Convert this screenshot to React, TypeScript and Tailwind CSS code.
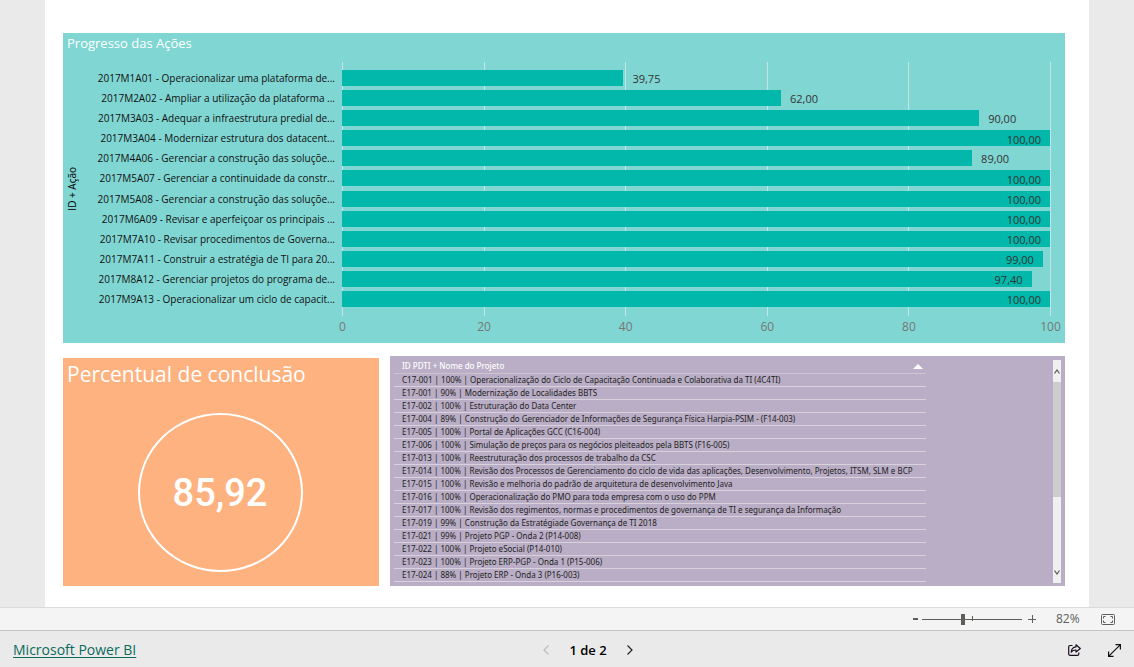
import { useState } from "react";

const actions = [
  { name: "2017M1A01 - Operacionalizar uma plataforma de...", value: 39.75 },
  { name: "2017M2A02 - Ampliar a utilização da plataforma ...", value: 62 },
  { name: "2017M3A03 - Adequar a infraestrutura predial de...", value: 90 },
  { name: "2017M3A04 - Modernizar estrutura dos datacent...", value: 100 },
  { name: "2017M4A06 - Gerenciar a construção das soluçõe...", value: 89 },
  { name: "2017M5A07 - Gerenciar a continuidade da constr...", value: 100 },
  { name: "2017M5A08 - Gerenciar a construção das soluçõe...", value: 100 },
  { name: "2017M6A09 - Revisar e aperfeiçoar os principais ...", value: 100 },
  { name: "2017M7A10 - Revisar procedimentos de Governa...", value: 100 },
  { name: "2017M7A11 - Construir a estratégia de TI para 20...", value: 99 },
  { name: "2017M8A12 - Gerenciar projetos do programa de...", value: 97.4 },
  { name: "2017M9A13 - Operacionalizar um ciclo de capacit...", value: 100 },
];

const projects = [
  "C17-001 | 100% | Operacionalização do Ciclo de Capacitação Continuada e Colaborativa da TI (4C4TI)",
  "E17-001 | 90% | Modernização de Localidades BBTS",
  "E17-002 | 100% | Estruturação do Data Center",
  "E17-004 | 89% | Construção do Gerenciador de Informações de Segurança Física Harpia-PSIM - (F14-003)",
  "E17-005 | 100% | Portal de Aplicações GCC (C16-004)",
  "E17-006 | 100% | Simulação de preços para os negócios pleiteados pela BBTS (F16-005)",
  "E17-013 | 100% | Reestruturação dos processos de trabalho da CSC",
  "E17-014 | 100% | Revisão dos Processos de Gerenciamento do ciclo de vida das aplicações, Desenvolvimento, Projetos, ITSM, SLM e BCP",
  "E17-015 | 100% | Revisão e melhoria do padrão de arquitetura de desenvolvimento Java",
  "E17-016 | 100% | Operacionalização do PMO para toda empresa com o uso do PPM",
  "E17-017 | 100% | Revisão dos regimentos, normas e procedimentos de governança de TI e segurança da Informação",
  "E17-019 | 99% | Construção da Estratégiade Governança de TI 2018",
  "E17-021 | 99% | Projeto PGP - Onda 2 (P14-008)",
  "E17-022 | 100% | Projeto eSocial (P14-010)",
  "E17-023 | 100% | Projeto ERP-PGP - Onda 1 (P15-006)",
  "E17-024 | 88% | Projeto ERP - Onda 3 (P16-003)",
];

const ticks = [0, 20, 40, 60, 80, 100];

function format(value: number) {
  return value.toFixed(2).replace(".", ",");
}

function ProgressChart() {
  return (
    <section className="bg-[#80d6d3] pt-px pb-[8px]">
      <h2 className="px-1 text-[13px] leading-[18px] text-white">Progresso das Ações</h2>
      <div className="mt-[10px] grid grid-cols-[18px_261px_1fr] pr-[14px]">
        <div className="flex items-center justify-center">
          <span className="rotate-180 text-[10px] leading-4 whitespace-nowrap text-black [writing-mode:vertical-rl]">
            ID + Ação
          </span>
        </div>
        <ul className="flex h-[254px] flex-col pt-[6px] pr-[7px] pb-[7px]">
          {actions.map((a) => (
            <li
              key={a.name}
              className="flex flex-1 items-center justify-end text-[10px] leading-4 whitespace-nowrap text-[#111]"
            >
              {a.name}
            </li>
          ))}
        </ul>
        <div className="grid h-[254px]">
          <div className="col-start-1 row-start-1 flex justify-between">
            {ticks.map((t) => (
              <span key={t} className="w-px bg-[#c2e6e5]" />
            ))}
          </div>
          <ul className="col-start-1 row-start-1 flex flex-col pt-[6px] pr-px pb-[7px]">
            {actions.map((a) => (
              <li key={a.name} className="flex flex-1 items-center text-[11px] leading-4 text-[#333]">
                <div
                  className="flex h-4 items-center justify-end bg-[#01b8aa] pr-[9px]"
                  style={{ width: `${a.value}%` }}
                >
                  {a.value > 95 && <span className="pt-[3px]">{format(a.value)}</span>}
                </div>
                {a.value <= 95 && <span className="pt-[2px] pl-[9px]">{format(a.value)}</span>}
              </li>
            ))}
          </ul>
        </div>
        <div className="col-start-3 flex justify-between pt-[3px] text-[12px] leading-4 text-[#777]">
          {ticks.map((t) => (
            <span key={t} className="flex w-px justify-center">
              {t}
            </span>
          ))}
        </div>
      </div>
    </section>
  );
}

function CompletionCard() {
  return (
    <section className="mt-[2px] flex flex-col bg-[#fdb280]">
      <h2 className="px-1 text-[21px] leading-8 whitespace-nowrap text-white">Percentual de conclusão</h2>
      <div className="flex flex-1 items-start justify-center pt-[23px] pr-[2px]">
        <div className="flex h-[159px] w-[165px] items-center justify-center rounded-[50%] border-2 border-white">
          <span className="font-[Roboto] text-[38px] leading-none font-medium text-white">85,92</span>
        </div>
      </div>
    </section>
  );
}

function ProjectTable() {
  return (
    <section className="flex bg-[#b9aec5] pt-1 pr-1 pb-[3px] pl-1">
      <div className="min-w-0 flex-1">
        <table className="w-[532px] border-collapse text-left font-['Noto_Sans'] text-[8px] whitespace-nowrap text-[#222]">
          <thead>
            <tr className="h-[13px] border-b border-[#cbc5d1]">
              <th className="p-0 pl-2 leading-3 font-medium text-white" aria-sort="ascending">
                <button type="button" className="flex w-full items-center justify-between pr-[3px]">
                  ID PDTI + Nome do Projeto
                  <svg width="10" height="5" viewBox="0 0 10 5" fill="white">
                    <path d="M0 5 5 0l5 5z" />
                  </svg>
                </button>
              </th>
            </tr>
          </thead>
          <tbody>
            {projects.map((p) => (
              <tr key={p} className="h-[13px] border-b border-[#d8d2dc]">
                <td className="p-0 pl-2 leading-3">{p}</td>
              </tr>
            ))}
          </tbody>
        </table>
      </div>
      <div className="flex w-2 flex-col bg-[#f0f0f0]">
        <button type="button" aria-label="Rolar para cima" className="flex h-[22px] items-center justify-center">
          <svg width="6" height="5" viewBox="0 0 6 5" fill="none" stroke="#505050" strokeWidth="1.1">
            <path d="M.5 4.5 3 1l2.500 3.500" />
          </svg>
        </button>
        <div className="h-[115px] bg-[#cdcdcd]" />
        <button
          type="button"
          aria-label="Rolar para baixo"
          className="mt-auto flex h-[22px] items-center justify-center"
        >
          <svg width="6" height="5" viewBox="0 0 6 5" fill="none" stroke="#505050" strokeWidth="1.1">
            <path d="M.5.5 3 4 5.500.5" />
          </svg>
        </button>
      </div>
    </section>
  );
}

function ZoomBar() {
  const [zoom, setZoom] = useState(82);
  return (
    <div className="flex h-[23px] items-center justify-end border-t border-[#dadada] bg-[#f4f4f4] pr-[19px] text-[#605e5c]">
      <button
        type="button"
        aria-label="Reduzir"
        className="flex w-[9px] justify-start"
        onClick={() => setZoom(Math.max(0, zoom - 10))}
      >
        <svg width="5" height="2" fill="currentColor">
          <rect width="5" height="2" />
        </svg>
      </button>
      <div className="relative flex h-4 w-[100px] items-center">
        <span className="absolute top-[5px] left-[50px] h-[5px] w-px bg-[#605e5c]" />
        <input
          type="range"
          min={0}
          max={200}
          value={zoom}
          aria-label="Zoom"
          onChange={(e) => setZoom(Number(e.target.value))}
          className="h-[11px] w-full appearance-none bg-[linear-gradient(#605e5c,#605e5c)] bg-[length:100%_1px] bg-center bg-no-repeat [&::-webkit-slider-thumb]:h-[11px] [&::-webkit-slider-thumb]:w-1 [&::-webkit-slider-thumb]:appearance-none [&::-webkit-slider-thumb]:bg-[#605e5c]"
        />
      </div>
      <button
        type="button"
        aria-label="Ampliar"
        className="ml-[6px]"
        onClick={() => setZoom(Math.min(200, zoom + 10))}
      >
        <svg width="8" height="8" viewBox="0 0 8 8" stroke="currentColor">
          <path d="M0 4.500h8M4.500 0v8" />
        </svg>
      </button>
      <span className="ml-[20px] w-[25px] text-[12px] leading-4 whitespace-nowrap">{zoom}%</span>
      <button type="button" aria-label="Ajustar à página" className="ml-[20px]">
        <svg width="14" height="11" viewBox="0 0 14 11" fill="none" stroke="currentColor">
          <rect x=".5" y=".5" width="13" height="10" rx="1" />
          <path d="M4.500 2.500h-2v2M9.500 2.500h2v2M4.500 8.500h-2v-2M9.500 8.500h2v-2" />
        </svg>
      </button>
    </div>
  );
}

function Footer() {
  return (
    <footer className="grid h-[37px] grid-cols-[1fr_auto_1fr] items-center border-t border-[#c4c4c4] bg-[#eaeaea] pt-[2px] pr-[13px] pl-[13px]">
      <a href="#powerbi" className="justify-self-start text-[14px] leading-5 text-[#0b6a5d] underline underline-offset-2">
        Microsoft Power BI
      </a>
      <nav className="flex items-center gap-5 pl-[42px] text-black" aria-label="Páginas">
        <button type="button" aria-label="Página anterior" disabled>
          <svg width="6" height="10" viewBox="0 0 6 10" fill="none" stroke="#bdbdbd" strokeWidth="1.2">
            <path d="M5.500.5 1 5l4.500 4.500" />
          </svg>
        </button>
        <span className="text-[13px] leading-5 font-semibold">1 de 2</span>
        <button type="button" aria-label="Próxima página">
          <svg width="6" height="10" viewBox="0 0 6 10" fill="none" stroke="#222" strokeWidth="1.2">
            <path d="M.5.5 5 5 .5 9.500" />
          </svg>
        </button>
      </nav>
      <div className="flex items-center gap-[27px] justify-self-end">
        <button type="button" aria-label="Compartilhar">
          <svg width="13" height="12" viewBox="0 0 13 12" fill="none" stroke="#1b1020" strokeWidth="1.200" strokeLinejoin="round">
            <path d="M4.500 1.500H2A1.300 1.300 0 0 0 .7 2.800v7.200A1.300 1.300 0 0 0 2 11.300h7.500a1.300 1.300 0 0 0 1.300-1.300V8.500" />
            <path d="M8 .8 12.300 4.500 8 8V6C6 5.900 4.500 6.500 3.200 8.200 3.400 5 5.200 3 8 2.800z" />
          </svg>
        </button>
        <button type="button" aria-label="Tela inteira">
          <svg width="13" height="13" viewBox="0 0 13 13" fill="none" stroke="#111" strokeWidth="1.200">
            <path d="M.8 12.200 12.200.8M7.500.6h4.900v4.900M.6 7.500v4.900h4.900" />
          </svg>
        </button>
      </div>
    </footer>
  );
}

export default function App() {
  return (
    <div className="flex min-h-screen flex-col bg-[#eaeaea] font-['Open_Sans',sans-serif]">
      <main className="flex flex-1 flex-col px-[45px]">
        <div className="flex-1 bg-white pt-[33px] pr-6 pb-[21px] pl-[18px]">
          <ProgressChart />
          <div className="mt-[13px] grid h-[230px] grid-cols-[316fr_675fr] gap-[11px]">
            <CompletionCard />
            <ProjectTable />
          </div>
        </div>
      </main>
      <ZoomBar />
      <Footer />
    </div>
  );
}
